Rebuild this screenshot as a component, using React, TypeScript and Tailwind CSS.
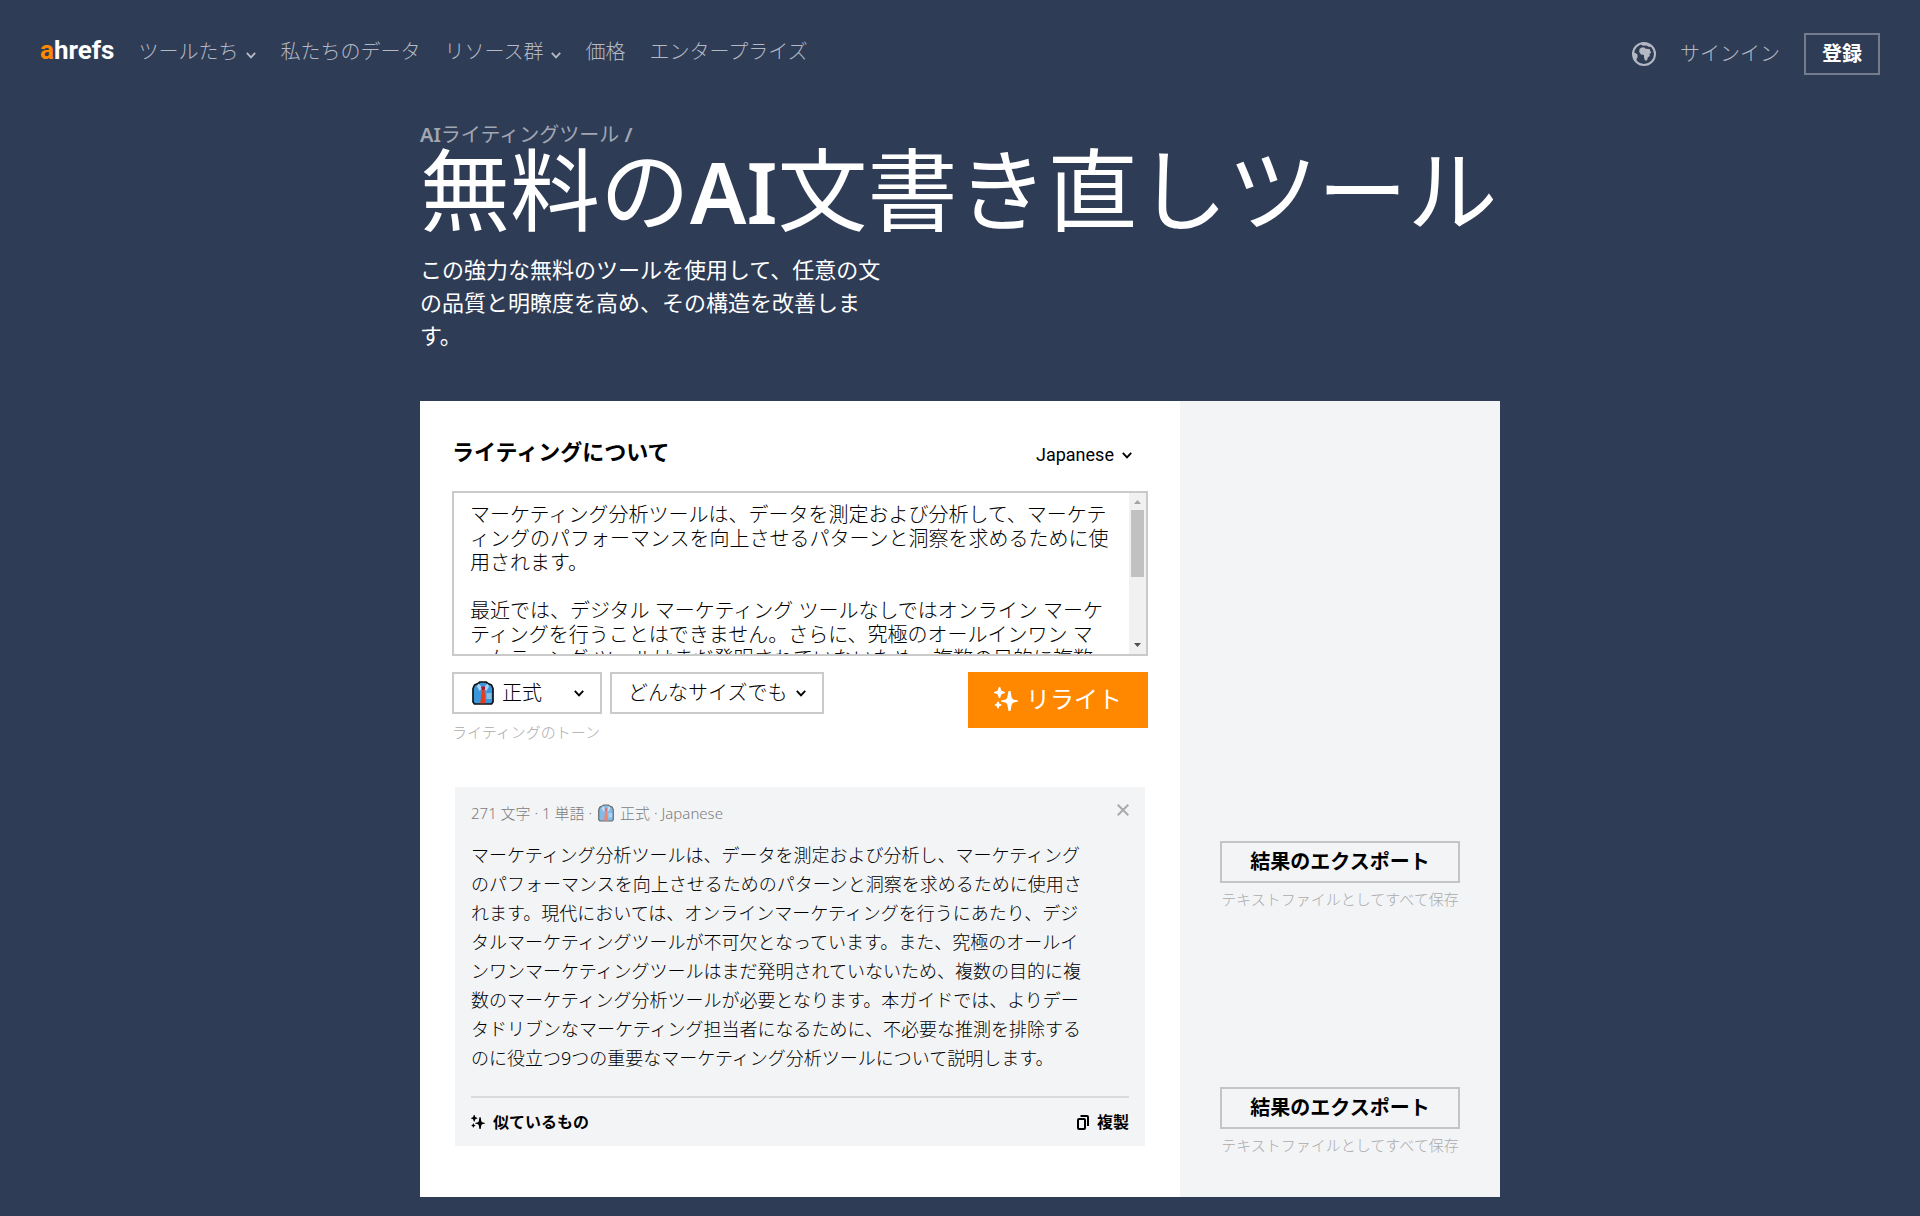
import { useState } from "react";

type IconProps = { className?: string };

function Chevron({ className = "" }: IconProps) {
  return (
    <svg className={className} width="10" height="7" viewBox="0 0 10 7" fill="none" stroke="currentColor" strokeWidth="1.900">
      <path d="M.8.9 5 5.400 9.200.9" />
    </svg>
  );
}

function Globe() {
  return (
    <svg width="24" height="24" viewBox="0 0 24 24" fill="currentColor">
      <circle cx="12" cy="12" r="11" fill="none" stroke="currentColor" strokeWidth="2" />
      <path d="M7.500 7 9.500 5.500h3l1 1.200 4 .3 1.700 4-1.700.8.300 2.200-2 1.500-.800 3h-2l-1-3v-2.500l-3-.500L7.200 10z" />
      <path d="M1 10.500 3.500 11l2 1.500v3l-1 1.500.500 4L1.500 17z" />
      <path d="m8 1.500 6-.500 5 3.500-2 .500-2.500-1.500-3.500.300z" />
    </svg>
  );
}

function Sparkles({ className = "" }: IconProps) {
  return (
    <svg className={className} viewBox="0 0 24 24" fill="currentColor">
      <path d="M14.500 4h2l1.200 6.500 1.300 2 5 1v1l-5 1.200-1.300 1.800L16.500 24h-2l-1.200-6.500-1.300-1.800-5-1.200v-1l5-1 1.300-2z" />
      <path d="M4.800 0h1.400l.9 3 .9 1 3 1v1l-3 1-.9 1-.9 3H4.800l-.9-3-.9-1-3-1V5l3-1 .9-1z" />
      <path d="M3.500 14.500h1l.8 2 2.200.9v1l-2.200.8-.8 2.300h-1l-.8-2.300L.8 18.400v-1l1.900-.9z" />
    </svg>
  );
}

function Shirt({ className = "" }: IconProps) {
  return (
    <svg className={className} viewBox="0 0 22 24">
      <path d="M6 2.500 8 1h6l2 1.500L19.500 4 21 7.500V21l-1.500 2h-17L1 21V7.500L2.500 4z" fill="#3a96dd" stroke="#111" strokeWidth="1.700" strokeLinejoin="round" />
      <path d="M6.500 2.500 11 7 7.500 10 5 5.500zM15.500 2.500 11 7l3.500 3L17 5.500z" fill="#a9d3f5" />
      <path d="M14.500 12h5v6h-5z" fill="#83beec" />
      <path d="M10 9 8.300 22.200h5.400L12.500 9z" fill="#f03a17" />
      <path d="M9 5.500h4.200L12.700 9H9.800z" fill="#b0122b" />
    </svg>
  );
}

function CopyIcon() {
  return (
    <svg width="12" height="16" viewBox="0 0 12 16" fill="none" stroke="currentColor" strokeWidth="2">
      <rect x="1" y="5" width="7" height="10" rx="1" />
      <path d="M3.500 2H10a1 1 0 0 1 1 1v9" />
    </svg>
  );
}

const source = `マーケティング分析ツールは、データを測定および分析して、マーケティングのパフォーマンスを向上させるパターンと洞察を求めるために使用されます。

最近では、デジタル マーケティング ツールなしではオンライン マーケティングを行うことはできません。さらに、究極のオールインワン マーケティング ツールはまだ発明されていないため、複数の目的に複数のマーケティング分析ツールが必要になります。

このガイドでは、よりデータドリブンなマーケティング担当者になるために、推測を排除するのに役立つ9つの重要なマーケティング分析ツールについて説明します。

それぞれのツールの特徴と使い方を順番に紹介します。ぜひ最後までご覧ください。`;

const result =
  "マーケティング分析ツールは、データを測定および分析し、マーケティングのパフォーマンスを向上させるためのパターンと洞察を求めるために使用されます。現代においては、オンラインマーケティングを行うにあたり、デジタルマーケティングツールが不可欠となっています。また、究極のオールインワンマーケティングツールはまだ発明されていないため、複数の目的に複数のマーケティング分析ツールが必要となります。本ガイドでは、よりデータドリブンなマーケティング担当者になるために、不必要な推測を排除するのに役立つ9つの重要なマーケティング分析ツールについて説明します。";

const navItems = [
  { label: "ツールたち", menu: true },
  { label: "私たちのデータ", menu: false },
  { label: "リソース群", menu: true },
  { label: "価格", menu: false },
  { label: "エンタープライズ", menu: false },
];

function ScrollBar() {
  return (
    <div aria-hidden="true" className="flex w-[17px] shrink-0 flex-col items-center bg-[#f1f1f1]">
      <svg width="17" height="17" viewBox="0 0 17 17" fill="#a3a3a3">
        <path d="M5 11h7L8.500 7z" />
      </svg>
      <div className="h-[67px] w-[13px] bg-[#c1c1c1]" />
      <svg className="mt-auto" width="17" height="17" viewBox="0 0 17 17" fill="#505050">
        <path d="M5 6h7l-3.500 4z" />
      </svg>
    </div>
  );
}

function ExportResult() {
  return (
    <div>
      <button className="flex h-[42px] w-full items-center justify-center border-2 border-[#c3c4c6] text-xl font-bold text-black">
        結果のエクスポート
      </button>
      <p className="mt-1 text-center text-[15px] leading-6 font-light whitespace-nowrap text-[#aaabad]">
        テキストファイルとしてすべて保存
      </p>
    </div>
  );
}

export default function App() {
  const [text, setText] = useState(source);
  const [tone, setTone] = useState("formal");
  const [size, setSize] = useState("any");
  const [language, setLanguage] = useState("ja");

  return (
    <div className="min-h-screen bg-[#2f3c56] pb-[19px] font-['Noto_Sans','Noto_Sans_CJK_JP',sans-serif] text-black">
      <header className="flex items-start justify-between px-10 pt-[33px]">
        <div className="flex h-[38px] items-center">
          <a href="#" className="mr-6 pb-1 font-['Roboto',sans-serif] text-[26px] leading-8 font-bold text-white">
            <span className="text-[#ff8800]">a</span>hrefs
          </a>
          <nav className="flex items-center gap-6 text-xl font-light text-[#b4b9c3]">
            {navItems.map((item) => (
              <a key={item.label} href="#" className="flex items-center gap-2">
                {item.label}
                {item.menu && <Chevron className="mt-1.5" />}
              </a>
            ))}
          </nav>
        </div>
        <div className="flex items-center gap-6 text-xl text-[#b4b9c3]">
          <button aria-label="言語">
            <Globe />
          </button>
          <a href="#" className="font-light">サインイン</a>
          <a href="#" className="flex h-[42px] items-center border-2 border-[#737b8c] px-4 font-bold text-white">
            登録
          </a>
        </div>
      </header>

      <main className="mx-auto max-w-[1080px]">
        <a href="#" className="mt-12 block text-xl leading-6 text-[#a1a7b2]">
          <span className="font-semibold">AI</span>ライティングツール <span className="font-semibold">/</span>
        </a>
        <h1 className="text-[90px] leading-[84px] whitespace-nowrap text-white">
          無料の<span className="text-[84px] leading-[0px] font-semibold">AI</span>文書き直しツール
        </h1>
        <p className="mt-[22px] max-w-[480px] text-[22px] leading-[33px] text-white">
          この強力な無料のツールを使用して、任意の文の品質と明瞭度を高め、その構造を改善します。
        </p>

        <div className="mt-[49px] flex bg-white">
          <section className="min-w-0 flex-1 px-8 pt-[30px] pb-[51px]">
            <div className="flex h-10 items-center justify-between pr-4">
              <h2 className="text-[22px] font-bold">
                <label htmlFor="source">ライティングについて</label>
              </h2>
              <div className="relative flex items-center pt-2">
                <select
                  aria-label="言語"
                  value={language}
                  onChange={(e) => setLanguage(e.target.value)}
                  className="appearance-none pr-[18px] font-['Roboto',sans-serif] text-lg outline-none"
                >
                  <option value="ja">Japanese</option>
                </select>
                <Chevron className="pointer-events-none absolute right-0" />
              </div>
            </div>

            <div className="mt-5 flex h-[165px] border-2 border-[#cacaca]">
              <textarea
                id="source"
                value={text}
                onChange={(e) => setText(e.target.value)}
                className="min-w-0 flex-1 resize-none pt-2.5 pr-[18px] pl-4 text-xl leading-6 font-light outline-none"
              />
              <ScrollBar />
            </div>

            <div className="mt-4 flex items-start justify-between">
              <div className="flex items-start gap-2">
                <div>
                  <div className="relative flex items-center">
                    <Shirt className="pointer-events-none absolute left-5 h-6 w-[22px]" />
                    <select
                      id="tone"
                      value={tone}
                      onChange={(e) => setTone(e.target.value)}
                      className="h-[42px] w-[150px] appearance-none border-2 border-[#cacaca] pl-12 text-xl font-light outline-none"
                    >
                      <option value="formal">正式</option>
                    </select>
                    <Chevron className="pointer-events-none absolute right-[18px]" />
                  </div>
                  <label htmlFor="tone" className="mt-1.5 block text-[15px] leading-6 font-light text-[#aaaaaa]">
                    ライティングのトーン
                  </label>
                </div>
                <div className="relative flex items-center">
                  <select
                    aria-label="サイズ"
                    value={size}
                    onChange={(e) => setSize(e.target.value)}
                    className="h-[42px] w-[214px] appearance-none border-2 border-[#cacaca] pl-4 text-xl font-light outline-none"
                  >
                    <option value="any">どんなサイズでも</option>
                  </select>
                  <Chevron className="pointer-events-none absolute right-[18px]" />
                </div>
              </div>
              <button className="flex h-14 w-[180px] items-center justify-center gap-2 bg-[#ff8800] pb-0.5 text-2xl text-white">
                <Sparkles className="h-6 w-6" />
                リライト
              </button>
            </div>

            <article className="mx-[3px] mt-[43px] bg-[#f3f4f6] px-4 pt-3.5 pb-3">
              <div className="flex items-start justify-between">
                <p className="flex items-center gap-1.5 text-[15px] leading-6 font-light text-[#7b7c7d]">
                  <span>271 文字 · 1 単語 ·</span>
                  <Shirt className="h-[18px] w-4 opacity-60" />
                  <span>正式 · Japanese</span>
                </p>
                <button aria-label="閉じる" className="pt-[3px] text-[#a9aaac]">
                  <svg width="12" height="12" viewBox="0 0 12 12" stroke="currentColor" strokeWidth="2">
                    <path d="M.7.7l10.600 10.600M11.300.7.7 11.300" />
                  </svg>
                </button>
              </div>
              <p className="mt-4 max-w-[624px] text-lg leading-[29px] font-light">{result}</p>
              <div className="mt-[23px] flex items-center justify-between border-t-2 border-[#d9dadc] pt-3 text-base leading-6 font-bold">
                <button className="flex items-center gap-2">
                  <Sparkles className="h-3.5 w-3.5" />
                  似ているもの
                </button>
                <button className="flex items-center gap-2">
                  <CopyIcon />
                  複製
                </button>
              </div>
            </article>
          </section>

          <aside className="flex w-80 flex-col justify-end gap-44 bg-[#f3f4f6] px-10 pb-10">
            <ExportResult />
            <ExportResult />
          </aside>
        </div>
      </main>
    </div>
  );
}
